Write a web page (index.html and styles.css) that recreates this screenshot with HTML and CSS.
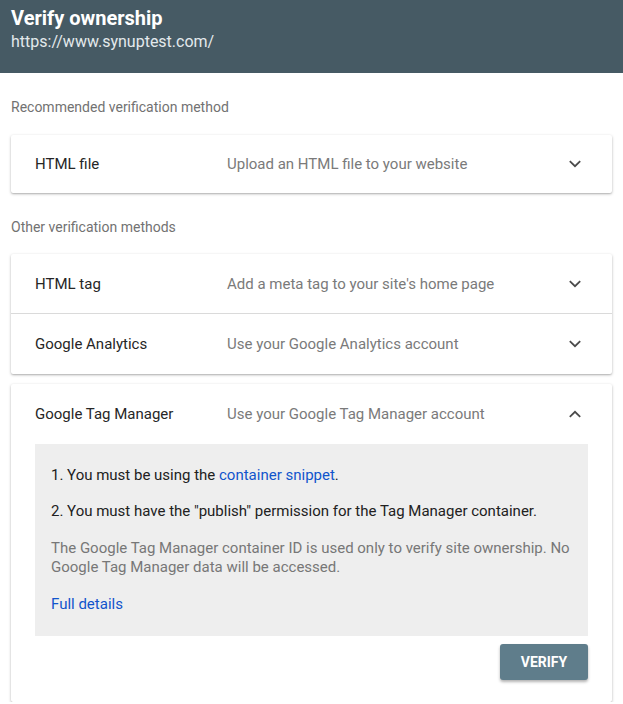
FILE: index.html
```html
<!DOCTYPE html>
<html>
<head>
<meta charset="utf-8">
<link rel="stylesheet" href="styles.css">
</head>
<body>
<header class="topbar">
  <h1 class="title">Verify ownership</h1>
  <div class="url">https://www.synuptest.com/</div>
</header>
<main class="content">
  <div class="section-label">Recommended verification method</div>
  <div class="card">
    <div class="row short">
      <span class="row-title">HTML file</span>
      <span class="row-desc">Upload an HTML file to your website</span>
      <svg class="chev" viewBox="0 0 24 24"><path d="M6.8 9.2L12 14.2l5.2-5"/></svg>
    </div>
  </div>
  <div class="section-label second">Other verification methods</div>
  <div class="card">
    <div class="row divided">
      <span class="row-title">HTML tag</span>
      <span class="row-desc">Add a meta tag to your site's home page</span>
      <svg class="chev" viewBox="0 0 24 24"><path d="M6.8 9.2L12 14.2l5.2-5"/></svg>
    </div>
    <div class="row">
      <span class="row-title">Google Analytics</span>
      <span class="row-desc">Use your Google Analytics account</span>
      <svg class="chev" viewBox="0 0 24 24"><path d="M6.8 9.2L12 14.2l5.2-5"/></svg>
    </div>
  </div>
  <div class="card expanded">
    <div class="row">
      <span class="row-title">Google Tag Manager</span>
      <span class="row-desc">Use your Google Tag Manager account</span>
      <svg class="chev" viewBox="0 0 24 24"><path d="M6.8 14.8L12 9.8l5.2 5"/></svg>
    </div>
    <div class="panel">
      <p class="step">1. You must be using the <a class="link" href="#">container snippet</a>.</p>
      <p class="step">2. You must have the "publish" permission for the Tag Manager container.</p>
      <p class="note">The Google Tag Manager container ID is used only to verify site ownership. No Google Tag Manager data will be accessed.</p>
      <p class="step"><a class="link" href="#">Full details</a></p>
    </div>
    <div class="actions">
      <button class="verify">VERIFY</button>
    </div>
  </div>
</main>
</body>
</html>
```
FILE: styles.css
```css
* { box-sizing: border-box; }
html, body { margin: 0; padding: 0; background: #fff; }
body {
  font-family: Roboto, "Liberation Sans", Arial, sans-serif;
  color: #212121;
  width: 623px;
  overflow: hidden;
}
.topbar {
  background: #465a64;
  height: 73px;
  padding: 6px 11px 0;
  color: #fff;
}
.title {
  margin: 0;
  font-size: 20px;
  line-height: 24px;
  font-weight: 700;
}
.url {
  font-size: 16px;
  line-height: 24px;
  color: #e3e9ec;
}
.content {
  padding: 24px 11px 0 11px;
}
.section-label {
  font-size: 14px;
  line-height: 20px;
  color: #727272;
  margin-bottom: 18px;
}
.section-label.second {
  margin-top: 24px;
  margin-bottom: 17px;
}
.card {
  background: #fff;
  border-radius: 2px;
  box-shadow: 0 1px 3px rgba(0,0,0,0.28), 0 1px 1px rgba(0,0,0,0.08);
}
.card.expanded {
  margin-top: 10px;
  padding-bottom: 22px;
}
.row {
  display: flex;
  align-items: center;
  height: 60px;
  padding: 0 25px 0 24px;
}
.row.short {
  height: 58px;
}
.row.divided {
  border-bottom: 1px solid #dadada;
}
.row-title {
  width: 192px;
  flex: none;
  font-size: 15px;
  color: #262626;
}
.row-desc {
  flex: 1;
  font-size: 15px;
  color: #7a7a7a;
}
.chev {
  width: 24px;
  height: 24px;
  fill: none;
  stroke: #4a4a4a;
  stroke-width: 1.8;
  flex: none;
}
.panel {
  background: #eeeeee;
  margin: 0 24px;
  padding: 21px 16px 22px;
}
.panel p {
  margin: 0;
  font-size: 15px;
  line-height: 20px;
}
.panel p + p { margin-top: 16px; }
.panel .note {
  color: #777;
  font-size: 15px;
  line-height: 19px;
  margin-top: 18px;
}
.panel .note + p { margin-top: 17px; }
.link {
  color: #1155cc;
  text-decoration: none;
}
.actions {
  display: flex;
  justify-content: flex-end;
  padding: 8px 24px 0;
}
.verify {
  width: 88px;
  height: 36px;
  border: none;
  border-radius: 3px;
  background: #5f7d8b;
  color: #fff;
  font-family: Roboto, "Liberation Sans", Arial, sans-serif;
  font-weight: 700;
  font-size: 14px;
  box-shadow: 0 2px 3px rgba(0,0,0,0.3);
}
```
